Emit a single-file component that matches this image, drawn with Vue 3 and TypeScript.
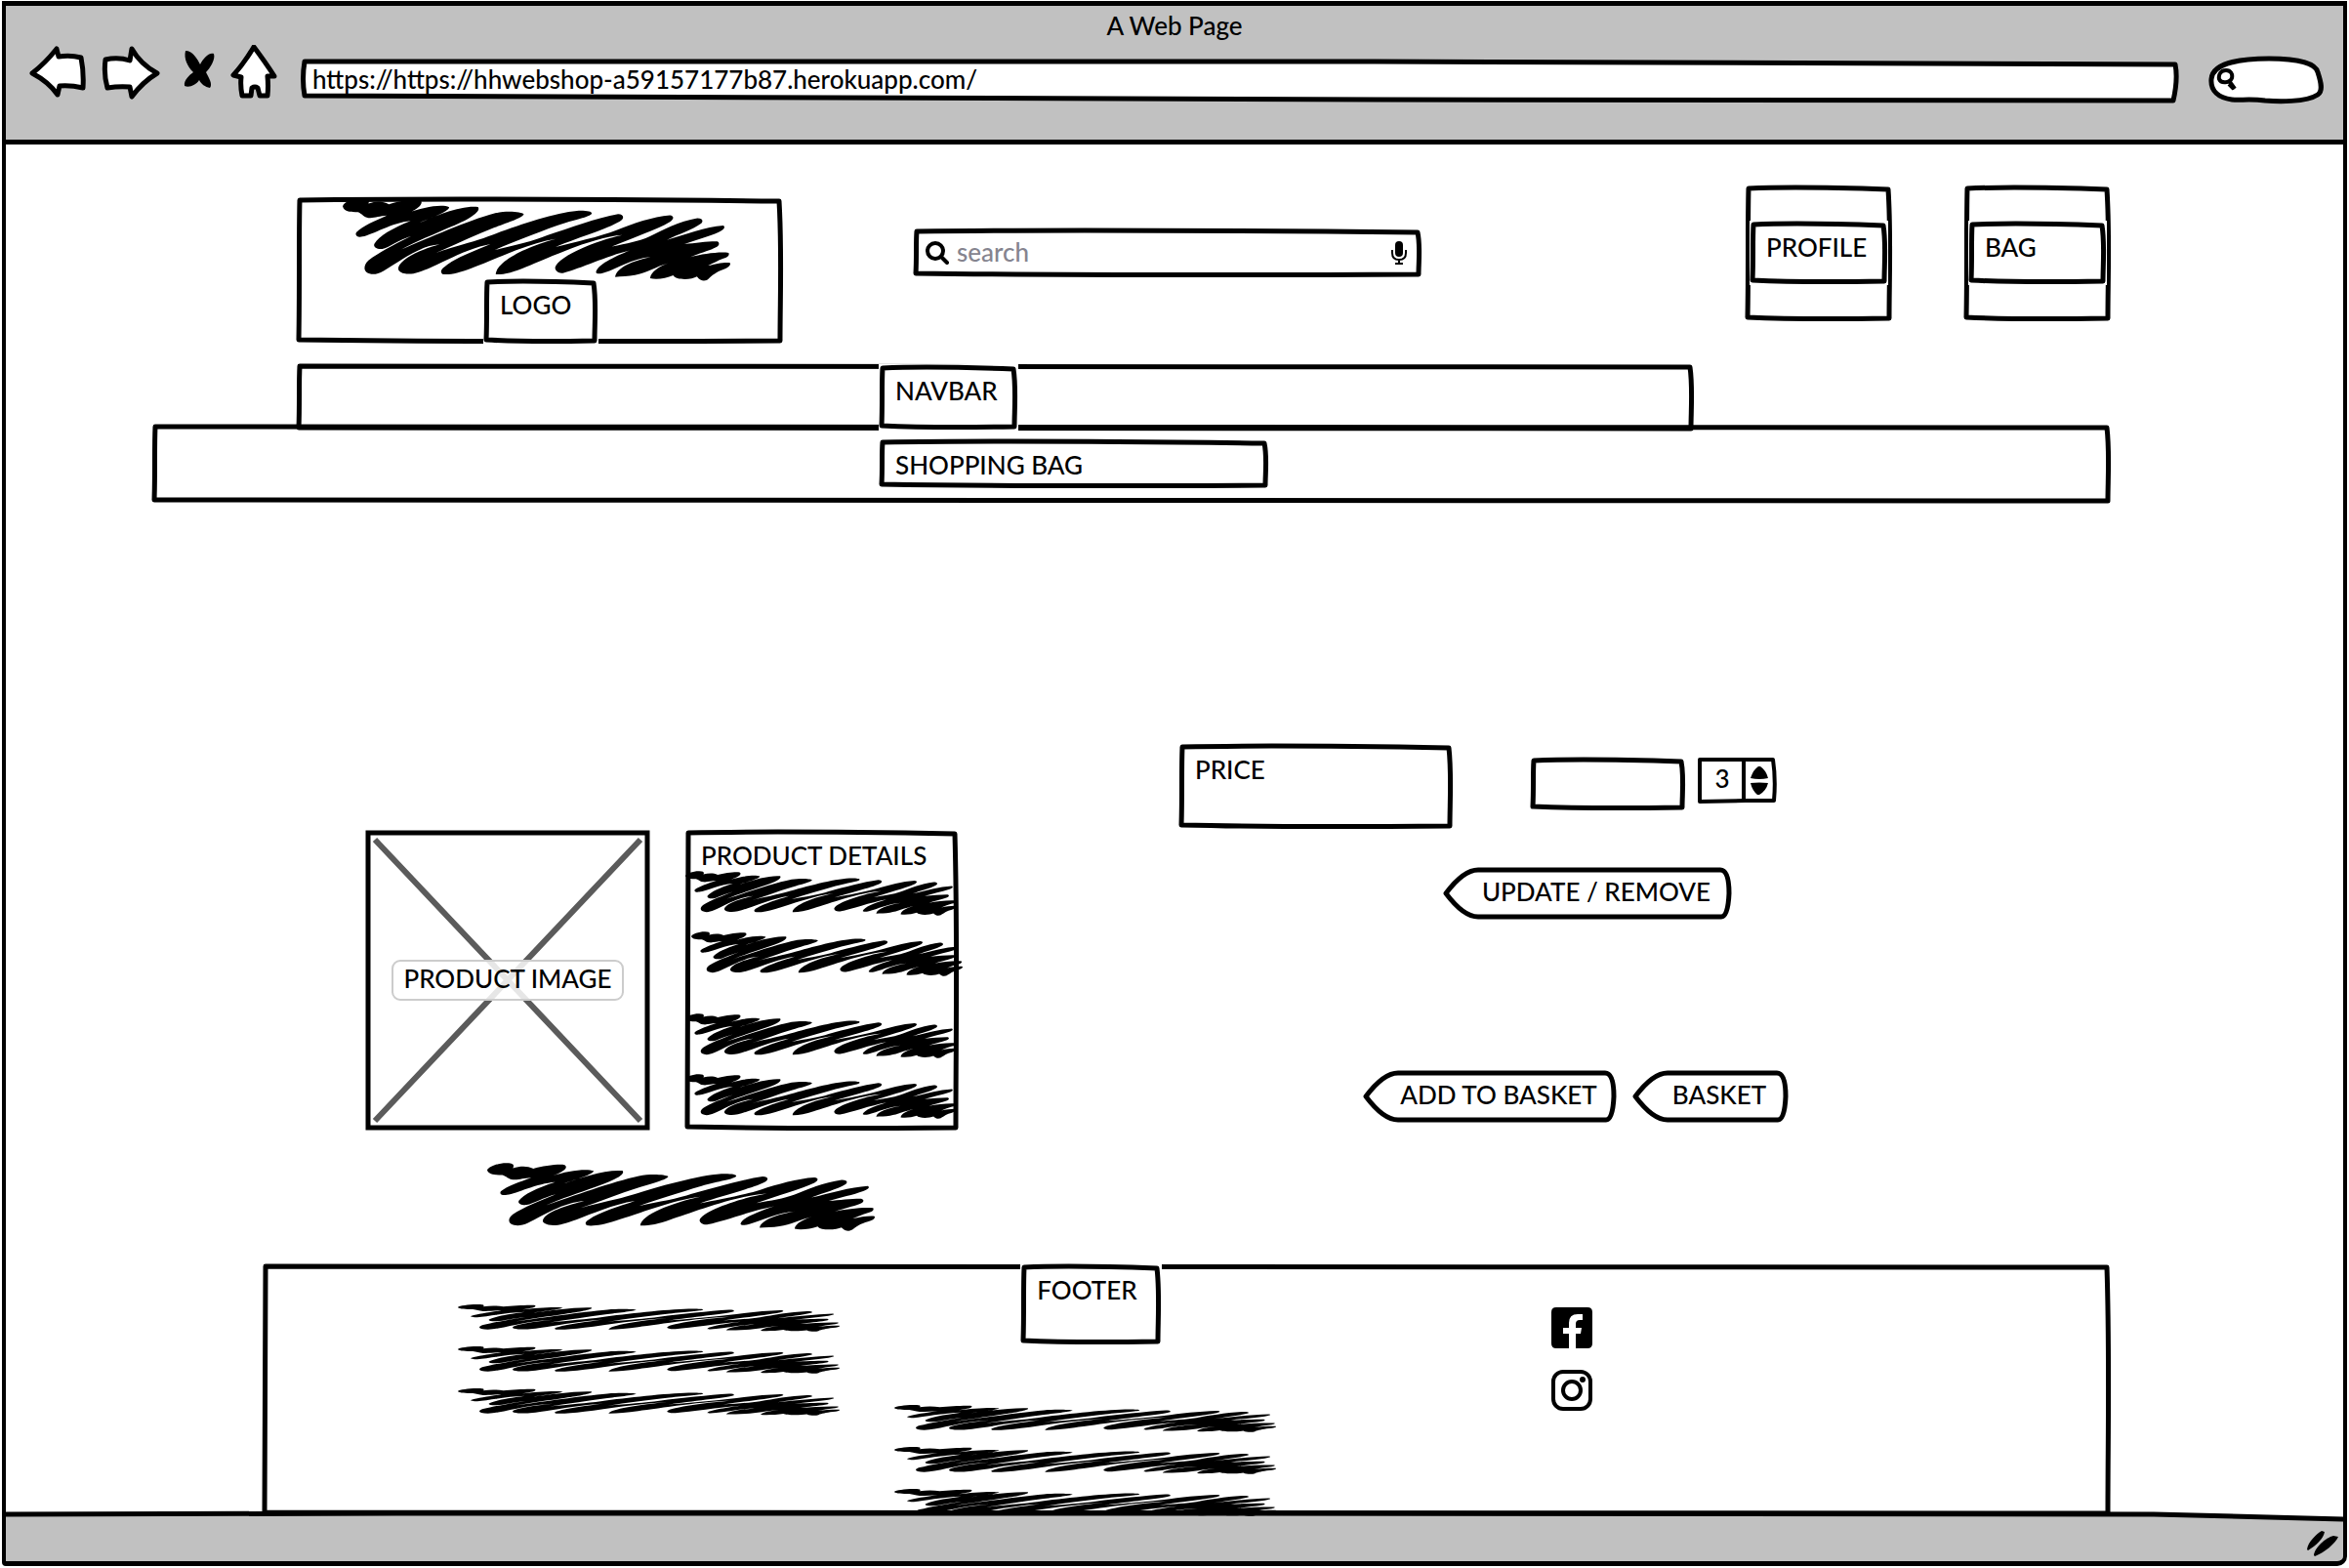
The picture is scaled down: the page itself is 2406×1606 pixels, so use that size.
<script setup lang="ts">
import { h, ref } from 'vue'

interface BoxSize {
  w: number
  h: number
}

const address = ref('https://https://hhwebshop-a59157177b87.herokuapp.com/')
const find = ref('')
const query = ref('')
const note = ref('')
const quantity = ref(3)

const svgBase = { preserveAspectRatio: 'none', 'aria-hidden': 'true' }

/* Hand-drawn rectangle: slightly bowed sides, stretched over its parent. */
const Frame = (p: BoxSize) => {
  const { w, h: t } = p
  const d =
    `M3 3C${w * 0.3} 1 ${w * 0.6} 2 ${w - 4} 4` +
    `C${w - 1} ${t * 0.35} ${w - 3} ${t * 0.7} ${w - 3} ${t - 3}` +
    `C${w * 0.6} ${t - 2} ${w * 0.3} ${t - 2} 2 ${t - 4}` +
    `C3 ${t * 0.6} 2 ${t * 0.3} 3 3Z`
  return h('svg', { ...svgBase, class: 'frame', viewBox: `0 0 ${w} ${t}` }, [h('path', { d })])
}
Frame.props = ['w', 'h']

/* Button outline with a pointed left end. */
const Tag = (p: BoxSize) => {
  const { w, h: t } = p
  const m = t / 2
  const d =
    `M3 ${m}C12 15 24 3 36 3H${w - 12}Q${w - 3} 3 ${w - 3} ${m}` +
    `Q${w - 4} ${t - 3} ${w - 11} ${t - 3}H36C24 ${t - 3} 12 ${t - 15} 3 ${m}Z`
  return h('svg', { ...svgBase, class: 'frame', viewBox: `0 0 ${w} ${t}` }, [h('path', { d })])
}
Tag.props = ['w', 'h']

const scribblePath =
  'M180 62C184 48 215 34 240 35C262 36 262 44 258 54C280 46 300 44 320 56C350 46 395 38 415 42C425 50 418 66 378 83' +
  'C420 66 480 54 503 65C500 80 450 96 413 113C460 92 540 58 590 64C602 78 560 104 510 125C460 148 400 172 358 196' +
  'C440 160 560 106 640 84C680 74 722 80 729 86C726 98 680 112 640 128C580 152 520 182 463 206C520 186 580 172 620 156' +
  'C700 124 820 82 890 76C920 75 936 78 935 85C930 96 880 104 830 122C760 148 700 172 640 198C700 182 760 170 800 152' +
  'C870 128 950 98 1015 86C1030 86 1034 96 1026 104C1000 126 900 156 825 188C880 174 960 156 1010 136C1060 116 1120 94 1172 90' +
  'C1186 92 1184 102 1172 110C1130 136 1060 158 996 187C1040 178 1080 170 1110 156C1150 136 1200 108 1255 99C1272 99 1274 108 1266 116' +
  'C1240 136 1200 148 1163 166C1220 150 1280 126 1334 122C1342 128 1334 136 1320 142C1290 156 1250 166 1216 179C1250 176 1290 170 1316 171' +
  'C1324 176 1322 184 1310 190C1290 200 1260 208 1234 219C1270 210 1320 202 1350 206C1354 214 1346 220 1334 224C1318 230 1304 238 1288 246' +
  'C1310 240 1340 234 1354 237C1358 244 1350 252 1334 258C1312 266 1300 276 1290 286C1282 295 1266 297 1254 280' +
  'C1238 290 1190 292 1182 276C1160 286 1130 290 1112 285C1114 264 1140 248 1168 238C1130 248 1100 270 1066 275C1046 279 1024 279 1006 281' +
  'C1010 252 1060 230 1114 219C1060 222 1010 256 975 267C962 272 948 272 948 266C952 244 1000 220 1050 199' +
  'C980 216 900 256 850 268C838 272 824 264 824 252C832 216 960 164 1028 151C940 156 800 224 735 250C700 266 668 274 644 273' +
  'C646 232 740 186 826 163C740 176 640 228 570 254C530 270 500 276 482 272C474 264 480 256 488 250C520 222 580 200 628 179' +
  'C560 192 500 228 450 250C410 268 390 275 366 270C346 264 346 254 352 244C370 216 430 192 474 180C410 184 350 236 304 262' +
  'C284 274 266 276 252 266C242 256 246 242 258 230C290 204 340 178 388 154C350 166 320 190 300 194C282 196 272 188 276 178' +
  'C290 154 330 130 386 107C330 112 270 150 240 156C222 160 216 150 222 142C240 124 280 106 314 91C290 92 276 100 258 98' +
  'C244 96 238 84 226 80C206 80 184 80 180 62Z'

const Scribble = () =>
  h('svg', { ...svgBase, class: 'scribble', viewBox: '180 34 1175 260' }, [h('path', { d: scribblePath })])
</script>

<template>
  <div class="window">
    <header class="chrome">
      <div class="title">A Web Page</div>
      <div class="toolbar">
        <nav class="tools" aria-label="Browser">
          <button class="tool wide" type="button" aria-label="Back">
            <svg viewBox="30 46 60 60"><path class="ink" d="M58 50L60 58Q72 56 83 59Q86 74 85 90Q72 87 61 88L59 97Q50 84 33 75Q46 65 58 50Z" /></svg>
          </button>
          <button class="tool wide" type="button" aria-label="Forward">
            <svg viewBox="104 46 60 60"><path class="ink" d="M108 61Q121 58 133 62L135 50Q144 66 161 75Q146 84 135 99L133 89Q122 88 110 90Q106 76 108 61Z" /></svg>
          </button>
          <button class="tool small" type="button" aria-label="Stop">
            <svg viewBox="178 46 44 60"><path d="M190 52C197 52 202 60 205 66C208 60 214 53 219 55C221 61 215 70 211 74C214 80 218 86 215 90C210 89 206 86 204 82C201 87 194 90 189 88C188 82 194 77 198 74C192 68 188 60 190 52Z" /></svg>
          </button>
          <button class="tool home" type="button" aria-label="Home">
            <svg viewBox="236 46 50 60"><path class="ink" d="M260 48Q250 65 239 77L247 79Q246 88 248 98H257L258 90Q261 88 264 90L266 98H274Q275 88 274 78H281Q272 64 260 48Z" /></svg>
          </button>
        </nav>
        <div class="address">
          <svg class="frame" viewBox="0 0 1922 45" preserveAspectRatio="none" aria-hidden="true">
            <path d="M4 2L1100 2L1919 5Q1922 20 1917 42L1100 41L4 37Q1 20 4 2Z" />
          </svg>
          <input v-model="address" type="text" aria-label="Address" />
        </div>
        <div class="find">
          <svg class="frame" viewBox="0 0 118 49" preserveAspectRatio="none" aria-hidden="true">
            <path d="M3 24C4 10 26 3 62 3C92 3 110 8 112 17C115 26 118 36 112 40C100 48 70 47 58 46C42 44 32 46 24 45C10 43 2 36 3 24Z" />
          </svg>
          <svg class="find-icon" viewBox="0 0 24 26" aria-hidden="true">
            <path d="M11 3C16 3 18 7 17 11C15 16 6 17 4 12C3 7 6 3 11 3ZM15 15L20 22M14 17L19 22" />
          </svg>
          <input v-model="find" type="text" aria-label="Find" />
        </div>
      </div>
    </header>

    <main class="page">
      <div class="top">
        <div class="logo">
          <Frame :w="498" :h="150" />
          <div class="mark"><Scribble /></div>
          <div class="label logo-label"><Frame :w="116" :h="66" />LOGO</div>
        </div>
        <div class="search">
          <Frame :w="520" :h="50" />
          <svg class="glass" viewBox="0 0 24 24" aria-hidden="true"><circle cx="10" cy="10" r="8" /><path d="M16 16L22 22" /></svg>
          <input v-model="query" type="search" placeholder="search" aria-label="Search the shop" />
          <svg class="mic" viewBox="0 0 16 24" aria-hidden="true">
            <rect x="4" y="0" width="8" height="16" rx="4" />
            <path d="M1 9V12Q1 19 8 19Q15 19 15 12V9M8 19V23M4 23H12" />
          </svg>
        </div>
        <div class="accounts">
          <div class="tile"><Frame :w="150" :h="139" /><a class="label" href="#profile"><Frame :w="140" :h="64" />PROFILE</a></div>
          <div class="tile"><Frame :w="150" :h="139" /><a class="label" href="#bag"><Frame :w="140" :h="64" />BAG</a></div>
        </div>
      </div>

      <nav class="navbar" aria-label="Main">
        <Frame :w="1431" :h="70" />
        <div class="label nav-label"><Frame :w="141" :h="66" />NAVBAR</div>
      </nav>
      <div class="banner">
        <Frame :w="2006" :h="82" />
        <h1 class="label"><Frame :w="398" :h="50" />SHOPPING BAG</h1>
      </div>

      <section class="product">
        <div class="item">
          <div class="cards">
            <figure class="picture">
              <svg class="cross" viewBox="0 0 292 308" preserveAspectRatio="none" aria-hidden="true">
                <path class="rays" d="M10 10L282 298M282 10L10 298" />
                <path class="edge" d="M3 3H289V305H3Z" />
              </svg>
              <figcaption>PRODUCT IMAGE</figcaption>
            </figure>
            <div class="details">
              <Frame :w="280" :h="308" />
              <h2>PRODUCT DETAILS</h2>
              <div class="lines"><Scribble /><Scribble class="shifted" /></div>
              <div class="lines"><Scribble /><Scribble /></div>
            </div>
          </div>
          <div class="note"><Scribble /></div>
        </div>

        <form class="order" @submit.prevent>
          <div class="price-row">
            <div class="label price"><Frame :w="280" :h="87" />PRICE</div>
            <div class="entry"><Frame :w="158" :h="54" /><input v-model="note" type="text" aria-label="Size" /></div>
            <div class="stepper">
              <svg class="frame" viewBox="0 0 81 47" preserveAspectRatio="none" aria-hidden="true">
                <path d="M2 2H77Q80 22 78 44H49L2 45ZM47 3V44" />
              </svg>
              <input v-model="quantity" type="number" aria-label="Quantity" />
              <div class="arrows">
                <button type="button" aria-label="More" @click="quantity++"><svg viewBox="0 0 18 13"><path d="M0 12Q3 3 8 0H10Q16 4 18 12Q9 14 0 12Z" /></svg></button>
                <button type="button" aria-label="Fewer" @click="quantity--"><svg viewBox="0 0 18 13"><path d="M0 1Q9 0 18 1Q16 9 9 13H7Q2 9 0 1Z" /></svg></button>
              </div>
            </div>
          </div>
          <button class="tag update" type="button"><Tag :w="296" :h="54" />UPDATE / REMOVE</button>
          <div class="basket-row">
            <button class="tag add" type="submit"><Tag :w="260" :h="54" />ADD TO BASKET</button>
            <button class="tag basket" type="button"><Tag :w="160" :h="54" />BASKET</button>
          </div>
        </form>
      </section>

      <footer class="footer">
        <Frame :w="1893" :h="259" />
        <div class="stack first"><Scribble /><Scribble /><Scribble /></div>
        <div class="middle">
          <div class="label footer-label"><Frame :w="143" :h="82" />FOOTER</div>
          <div class="stack"><Scribble /><Scribble /><Scribble /></div>
        </div>
        <div class="social">
          <a href="#facebook" aria-label="Facebook">
            <svg viewBox="0 0 42 42"><path d="M5 0H37Q42 0 42 5V37Q42 42 37 42H25V27H30L31 21H25V17Q25 13 29 13H32V7H27Q18 7 18 16V21H12V27H18V42H5Q0 42 0 37V5Q0 0 5 0Z" /></svg>
          </a>
          <a href="#instagram" aria-label="Instagram">
            <svg viewBox="0 0 42 42"><rect class="ring" x="2" y="2" width="38" height="38" rx="10" /><circle class="ring" cx="21" cy="21" r="9" /><circle cx="32" cy="10" r="3" /></svg>
          </a>
        </div>
      </footer>
    </main>

    <div class="status">
      <svg class="status-edge" viewBox="0 0 2394 53" preserveAspectRatio="none" aria-hidden="true">
        <path d="M-4 5L400 4L1200 4L2200 5L2398 10V60H-4Z" />
      </svg>
      <svg class="grip" viewBox="0 0 32 26" aria-hidden="true">
        <path d="M0 19C1 11 10 3 15 0L18 1C17 8 9 15 1 20ZM7 25C8 17 19 7 27 5L32 6C29 13 18 22 8 26Z" />
      </svg>
    </div>
  </div>
</template>

<style>
body {
  margin: 0;
  background: #fff;
}
</style>

<style scoped>
.window,
.window * {
  box-sizing: border-box;
}
.window {
  display: flex;
  flex-direction: column;
  margin: 1px 2px 0;
  border: 4px solid #000;
  border-width: 5px 4px;
  border-radius: 0 0 10px 4px;
  font: 500 26px/32px Lato, 'Open Sans', sans-serif;
  color: #000;
  overflow: hidden;
}
input,
button {
  margin: 0;
  padding: 0;
  border: 0;
  outline: 0;
  background: none;
  font: inherit;
  color: inherit;
}
input {
  position: relative;
  min-width: 0;
  appearance: none;
}
a {
  color: inherit;
  text-decoration: none;
}
svg {
  display: block;
}
h1,
h2,
figure {
  margin: 0;
  font: inherit;
}
.frame {
  position: absolute;
  inset: 0;
  width: 100%;
  height: 100%;
  overflow: visible;
  z-index: -1;
}
.frame :deep(path) {
  fill: none;
  stroke: #000;
  stroke-width: 5px;
  stroke-linejoin: round;
  vector-effect: non-scaling-stroke;
}
.scribble {
  width: 100%;
  height: 100%;
  overflow: visible;
}
.label {
  display: block;
  position: relative;
  z-index: 1;
  padding: 10px 16px;
  background: #fff;
  box-shadow: 0 0 0 1px #fff;
  white-space: nowrap;
}

/* Browser chrome */
.chrome {
  background: #c1c1c1;
  border-bottom: 5px solid #000;
  padding: 4px 0 37px;
}
.title {
  text-align: center;
}
.toolbar {
  display: flex;
  align-items: flex-end;
  gap: 22px;
  margin-top: 4px;
  padding: 0 20px 0 24px;
}
.tools {
  display: flex;
  gap: 14px;
}
.tool {
  height: 60px;
}
.tool svg {
  width: 100%;
  height: 60px;
}
.tool.wide {
  width: 60px;
}
.tool.small {
  width: 44px;
}
.tool.home {
  width: 50px;
}
.ink {
  fill: #fff;
  stroke: #000;
  stroke-width: 5px;
  stroke-linejoin: round;
}
.address,
.find {
  position: relative;
  z-index: 0;
}
.address .frame path,
.find .frame path {
  fill: #fff;
}
.address {
  flex: 1;
  height: 45px;
  padding: 4px 12px;
}
.address input {
  display: block;
  width: 100%;
  height: 32px;
}
.find {
  display: flex;
  align-items: center;
  width: 118px;
  height: 49px;
  margin-left: 9px;
  padding: 0 9px 0 7px;
}
.find input {
  width: 70px;
}
.find-icon {
  width: 24px;
  height: 26px;
  fill: none;
  stroke: #000;
  stroke-width: 4px;
  flex: none;
}

/* Page head */
.page {
  padding: 42px 238px 0 150px;
}
.top {
  display: grid;
  grid-template-columns: 498fr 134fr 520fr 332fr 374fr;
  align-items: start;
  margin-left: 148px;
}
.logo,
.search,
.tile,
.navbar,
.banner,
.details,
.entry,
.stepper,
.footer,
.tag {
  position: relative;
  z-index: 0;
}
.logo {
  height: 150px;
  margin-top: 12px;
  padding-left: 47px;
}
.mark {
  width: 397px;
  height: 86px;
}
.logo-label {
  width: 116px;
  height: 66px;
  margin: -2px 0 0 145px;
}
.search {
  grid-column: 3;
  display: flex;
  align-items: center;
  gap: 8px;
  height: 50px;
  margin-top: 44px;
  padding: 0 15px 0 12px;
}
.search input {
  flex: 1;
  height: 34px;
  padding-bottom: 2px;
}
.search input::placeholder {
  color: #85848f;
  opacity: 1;
}
.glass {
  width: 24px;
  height: 24px;
  fill: none;
  stroke: #000;
  stroke-width: 4px;
  stroke-linecap: round;
}
.mic {
  width: 16px;
  height: 24px;
}
.mic path {
  fill: none;
  stroke: #000;
  stroke-width: 2px;
}
.accounts {
  grid-column: 5;
  display: flex;
  justify-content: space-between;
}
.tile {
  width: 150px;
  height: 139px;
  padding: 37px 5px 0;
}
.tile .label {
  height: 64px;
}
.navbar {
  z-index: 1;
  height: 70px;
  margin: 21px 427px 0 148px;
  padding: 2px 0 0 597px;
}
.top {
  height: 161px;
}
.nav-label {
  width: 141px;
  height: 66px;
}
.banner {
  height: 82px;
  margin-top: -8px;
  padding: 16px 0 0 745px;
}
.banner .label {
  width: 398px;
  height: 50px;
}

/* Product */
.product {
  display: grid;
  grid-template-columns: 1052fr 954fr;
  padding-top: 246px;
}
.item {
  padding: 88px 0 0 218px;
}
.cards {
  display: flex;
  gap: 36px;
}
.picture {
  position: relative;
  display: flex;
  align-items: center;
  justify-content: center;
  width: 292px;
  height: 308px;
}
.cross {
  position: absolute;
  inset: 0;
  width: 100%;
  height: 100%;
}
.rays {
  stroke: #5b5b5b;
  stroke-width: 6px;
}
.edge {
  fill: none;
  stroke: #000;
  stroke-width: 5px;
}
.picture figcaption {
  position: relative;
  width: 238px;
  height: 42px;
  border: 2px solid #ccc;
  border-radius: 9px;
  background: rgba(255, 255, 255, 0.85);
  line-height: 34px;
  text-align: center;
  white-space: nowrap;
}
.details {
  width: 280px;
  height: 308px;
}
.details h2 {
  padding: 10px 16px 0;
  white-space: nowrap;
}
.lines {
  display: grid;
  gap: 16px;
  grid-auto-rows: 46px;
  width: 278px;
  margin: 0 0 38px;
}
.lines .shifted {
  margin-left: 6px;
}
.note {
  width: 397px;
  height: 70px;
  margin: 33px 0 0 125px;
}
.price-row {
  display: flex;
  height: 88px;
}
.price {
  width: 280px;
  height: 87px;
}
.entry {
  width: 158px;
  height: 54px;
  margin: 14px 13px 0 80px;
  padding: 8px;
}
.entry input {
  width: 100%;
}
.stepper {
  display: flex;
  width: 81px;
  height: 47px;
  margin-top: 14px;
}
.stepper .frame path {
  stroke-width: 4px;
}
.stepper input {
  width: 50px;
  height: 42px;
  text-align: center;
  appearance: textfield;
}
.stepper input::-webkit-inner-spin-button {
  display: none;
}
.arrows {
  display: flex;
  flex-direction: column;
  gap: 3px;
  padding: 9px 0 0 4px;
}
.arrows svg {
  width: 18px;
  height: 13px;
}
.arrows button {
  height: 13px;
}
.tag {
  display: block;
  height: 54px;
  padding: 0 0 4px 18px;
  white-space: nowrap;
}
.update {
  width: 296px;
  margin: 38px 0 0 270px;
}
.basket-row {
  display: flex;
  gap: 16px;
  margin: 154px 0 0 188px;
}
.add {
  width: 260px;
}
.basket {
  width: 160px;
}

/* Footer */
.footer {
  display: grid;
  grid-template-columns: 447fr 672fr 573fr;
  margin: 33px 0 0 113px;
  padding-left: 200px;
}
.stack {
  display: grid;
  grid-auto-rows: 28px;
  gap: 15px;
  width: 391px;
}
.first {
  padding-top: 42px;
  align-content: start;
}
.middle {
  padding-top: 1px;
}
.footer-label {
  width: 143px;
  height: 82px;
  margin: 0 0 62px 130px;
}
.social {
  display: flex;
  flex-direction: column;
  gap: 22px;
  padding-top: 45px;
}
.social a {
  width: 42px;
}
.social svg {
  width: 42px;
  height: 42px;
}
.ring {
  fill: none;
  stroke: #000;
  stroke-width: 4px;
}
.status {
  position: relative;
  display: flex;
  justify-content: flex-end;
  height: 53px;
  margin-top: -7px;
  padding: 22px 5px 0 0;
  z-index: -1;
}
.status-edge {
  position: absolute;
  inset: 0;
  width: 100%;
  height: 100%;
}
.status-edge path {
  fill: #c1c1c1;
  stroke: #000;
  stroke-width: 5px;
}
.grip {
  position: relative;
  width: 32px;
  height: 26px;
}
</style>
